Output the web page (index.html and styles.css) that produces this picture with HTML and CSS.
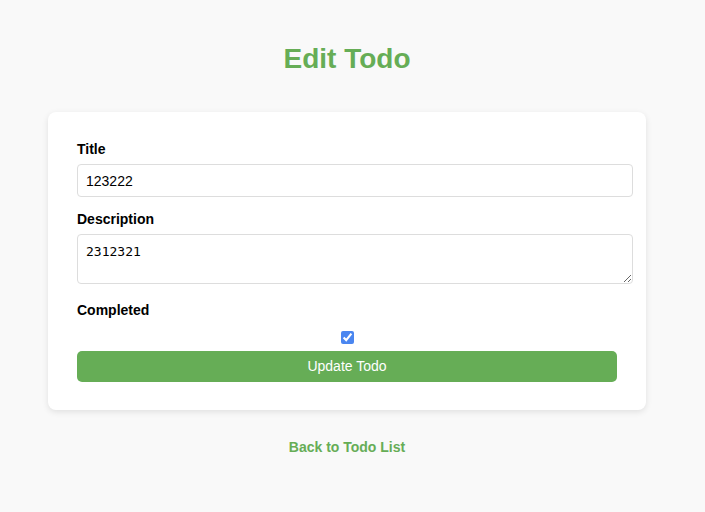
FILE: index.html
```html
<!DOCTYPE html>
<html lang="en">
<head>
<meta charset="utf-8">
<title>Edit Todo</title>
<link rel="stylesheet" href="styles.css">
</head>
<body>
<div class="page">
  <h1 class="title">Edit Todo</h1>
  <form class="card">
    <label class="label" for="title">Title</label>
    <input class="field" id="title" type="text" value="123222">
    <label class="label" for="desc">Description</label>
    <textarea class="area" id="desc">2312321</textarea>
    <label class="label" for="done">Completed</label>
    <input class="check" id="done" type="checkbox" checked>
    <button class="btn" type="button">Update Todo</button>
  </form>
  <a class="back" href="#">Back to Todo List</a>
</div>
</body>
</html>
```

FILE: styles.css
```css
html, body {
  margin: 0;
  padding: 0;
  background: #f9f9f9;
}
body {
  font-family: "Liberation Sans", Arial, sans-serif;
  color: #111;
}
.page {
  width: 694px;
  display: flex;
  flex-direction: column;
  align-items: center;
}
.title {
  margin: 43px 0 37px;
  font-size: 28px;
  font-weight: bold;
  color: #66ad56;
  line-height: 32px;
}
.card {
  box-sizing: border-box;
  width: 598px;
  padding: 29px 29px 28px 29px;
  background: #fff;
  border-radius: 8px;
  box-shadow: 0 2px 6px rgba(0, 0, 0, 0.1);
  display: flex;
  flex-direction: column;
}
.label {
  display: block;
  font-size: 14px;
  font-weight: bold;
  line-height: 16px;
  margin-bottom: 7px;
  color: #000;
}
.field {
  box-sizing: border-box;
  width: 556px;
  height: 33px;
  padding: 8px;
  border: 1px solid #ddd;
  border-radius: 4px;
  font-family: "Liberation Sans", Arial, sans-serif;
  font-size: 14px;
  line-height: 15px;
  margin: 0 0 14px;
  color: #000;
}
.area {
  display: block;
  box-sizing: border-box;
  width: 556px;
  height: 50px;
  padding: 9px 8px 8px;
  border: 1px solid #ddd;
  border-radius: 4px;
  font-family: "DejaVu Sans Mono", "Liberation Mono", monospace;
  font-size: 13px;
  line-height: 15px;
  margin: 0 0 18px;
  color: #000;
}
.check {
  display: block;
  width: 13px;
  height: 13px;
  margin: 6px auto 7px;
  align-self: center;
  accent-color: #4a86f0;
}
.btn {
  width: 540px;
  padding: 8px;
  border: none;
  border-radius: 5px;
  background: #66ad56;
  color: #fff;
  font-family: "Liberation Sans", Arial, sans-serif;
  font-size: 14px;
  line-height: 15px;
}
.back {
  margin-top: 29px;
  font-size: 14px;
  font-weight: bold;
  line-height: 16px;
  color: #66ad56;
  text-decoration: none;
}
```
